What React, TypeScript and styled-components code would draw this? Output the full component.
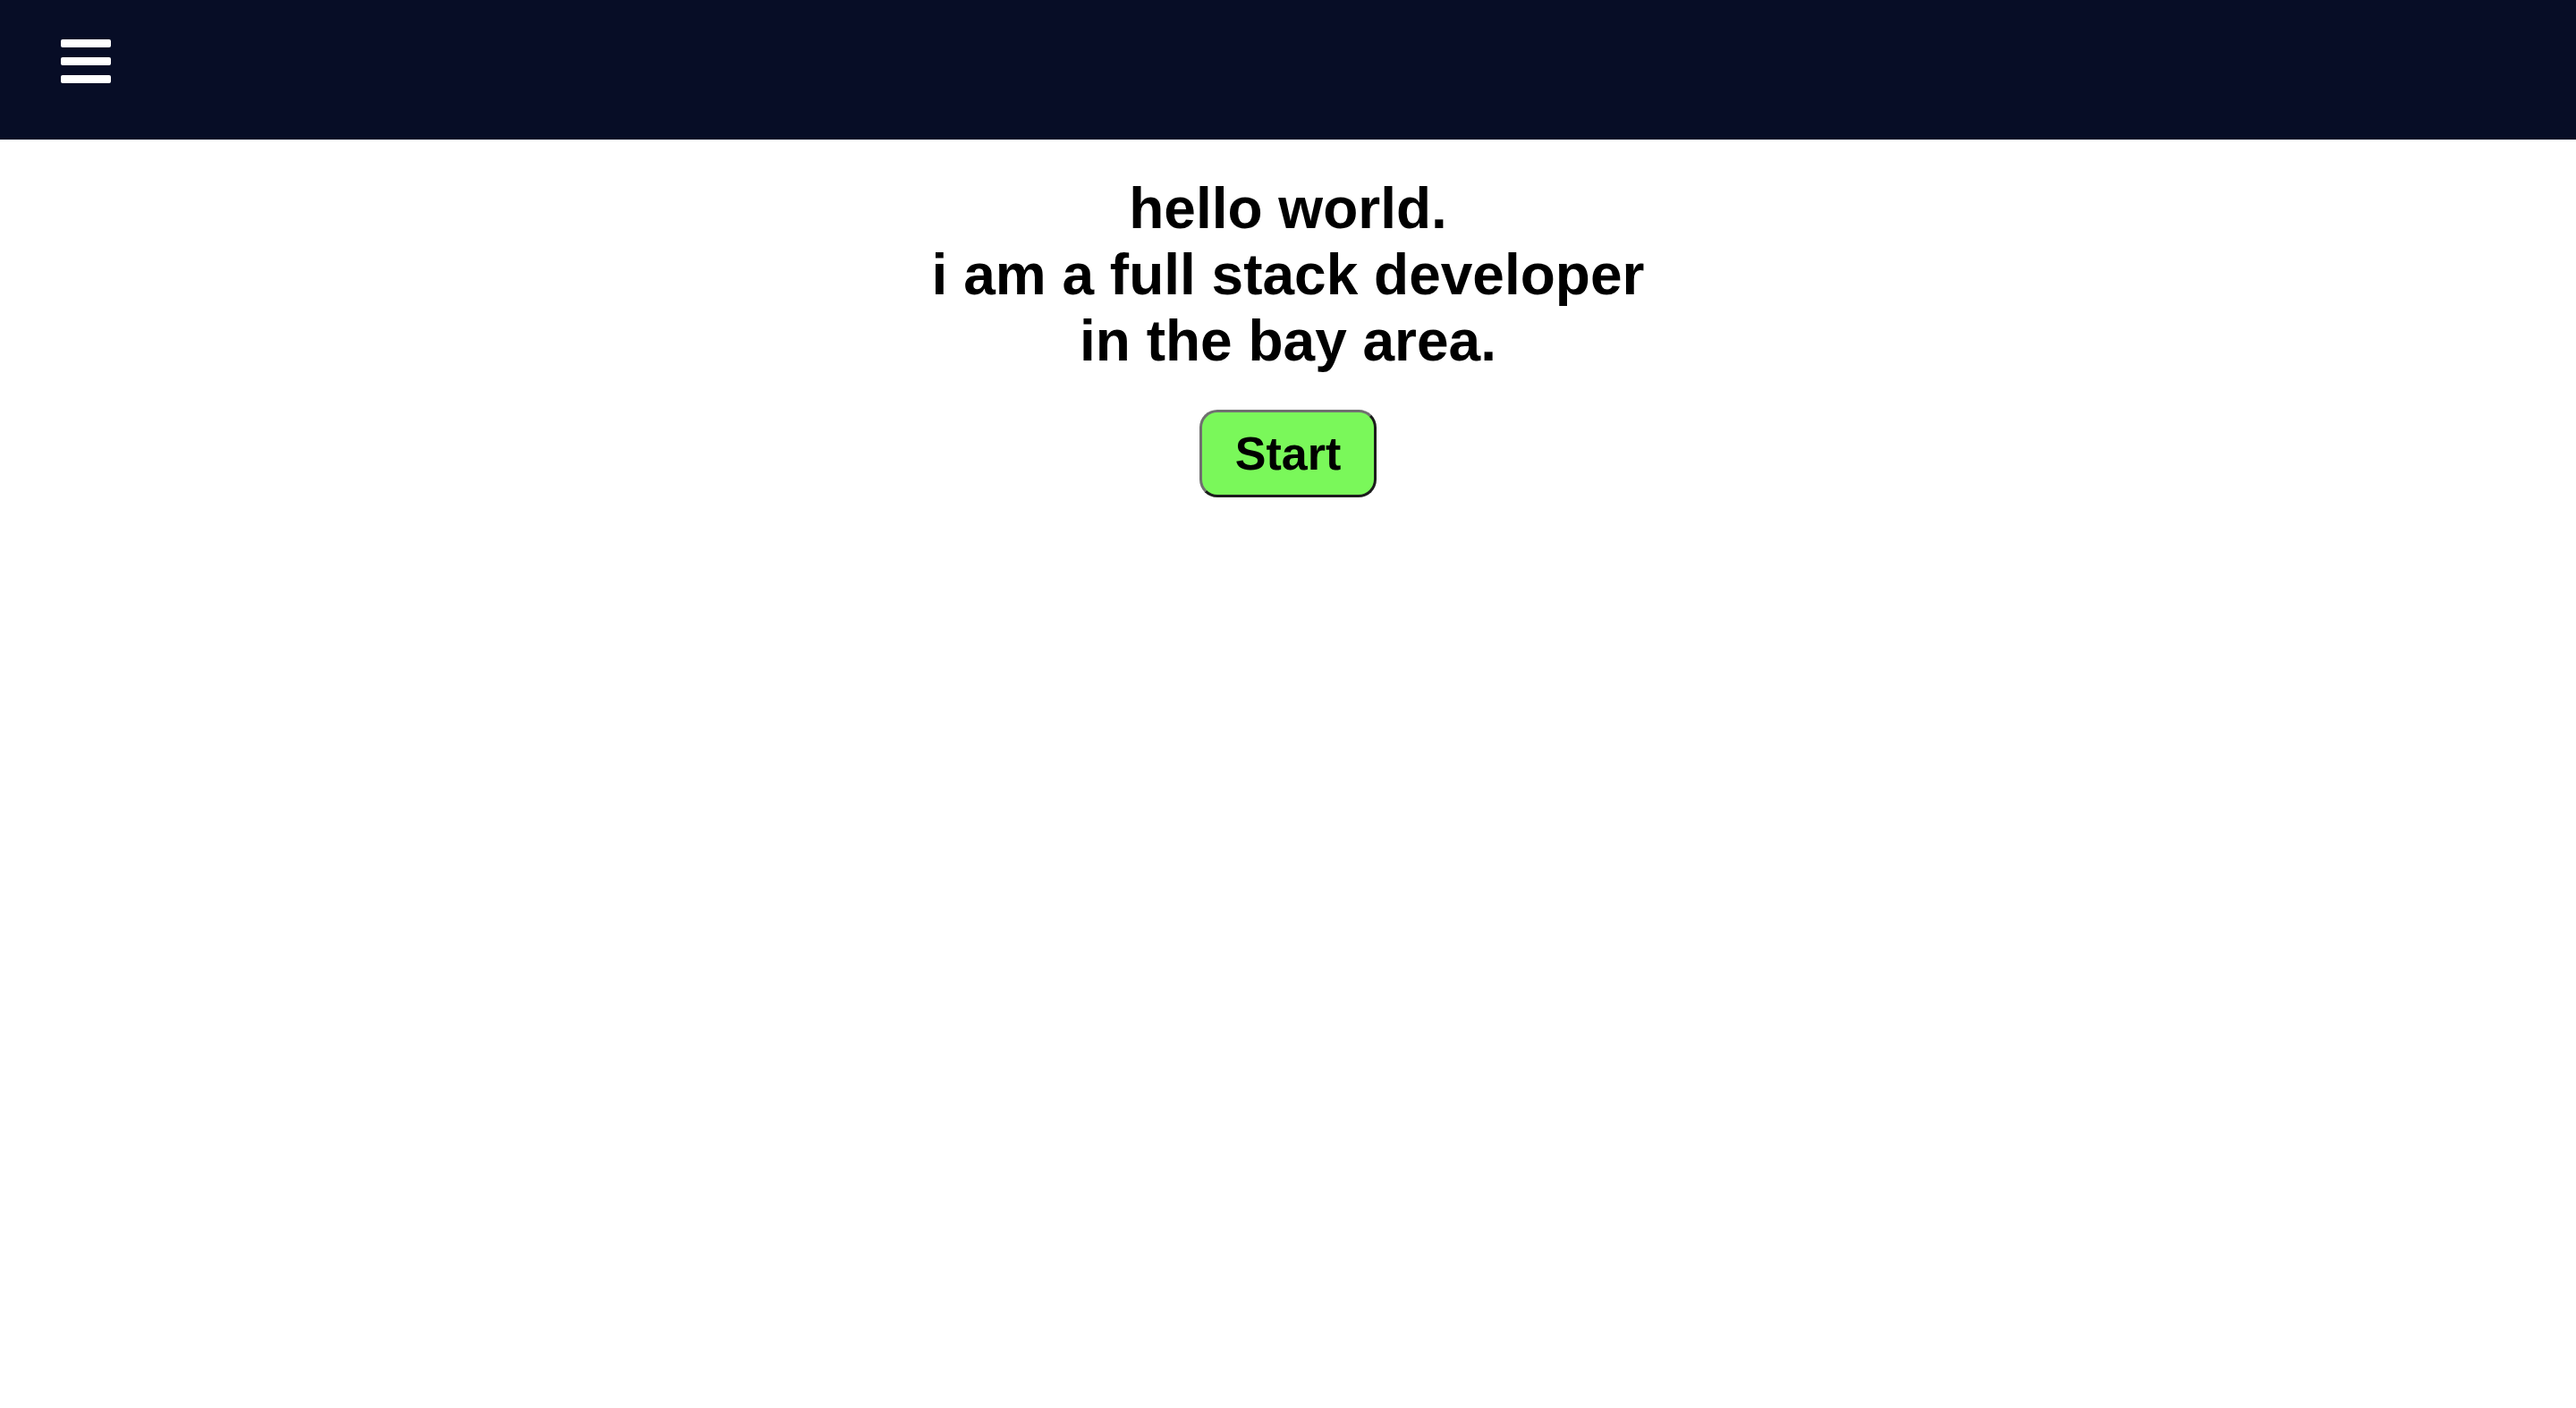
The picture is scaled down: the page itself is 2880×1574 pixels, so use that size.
import React from "react";
import styled, { createGlobalStyle } from "styled-components";

const GlobalStyle = createGlobalStyle`
  html, body {
    margin: 0;
    padding: 0;
    background: #fff;
  }

  body {
    font-family: "Liberation Sans", Arial, Helvetica, sans-serif;
    color: #000;
  }
`;

const Page = styled.div`
  min-height: 100vh;
  display: flex;
  flex-direction: column;
`;

const NavBar = styled.header`
  height: 156px;
  background: #070d26;
  display: flex;
  align-items: flex-start;
  padding: 44px 0 0 68px;
  box-sizing: border-box;
`;

const MenuButton = styled.button`
  display: flex;
  flex-direction: column;
  gap: 11px;
  width: 56px;
  padding: 0;
  border: none;
  background: transparent;
  cursor: pointer;
`;

const Bar = styled.span`
  display: block;
  height: 9px;
  width: 100%;
  background: #fff;
  border-radius: 2px;
`;

const Hero = styled.main`
  display: flex;
  flex-direction: column;
  align-items: center;
  padding-top: 40px;
`;

const Title = styled.h1`
  margin: 0;
  font-size: 64px;
  font-weight: bold;
  line-height: normal;
  text-align: center;
`;

const StartButton = styled.button`
  margin-top: 40px;
  font-family: "Liberation Sans", Arial, Helvetica, sans-serif;
  font-size: 52px;
  font-weight: bold;
  line-height: normal;
  color: #000;
  background: #7af85a;
  padding: 16px 37px;
  border: 3px solid;
  border-color: #707070 #1c1c1c #1c1c1c #707070;
  border-radius: 20px;
  cursor: pointer;
`;

const App = () => {
  return (
    <Page>
      <GlobalStyle />
      <NavBar>
        <MenuButton aria-label="menu">
          <Bar />
          <Bar />
          <Bar />
        </MenuButton>
      </NavBar>
      <Hero>
        <Title>
          hello world.
          <br />
          i am a full stack developer
          <br />
          in the bay area.
        </Title>
        <StartButton>Start</StartButton>
      </Hero>
    </Page>
  );
};

export default App;
